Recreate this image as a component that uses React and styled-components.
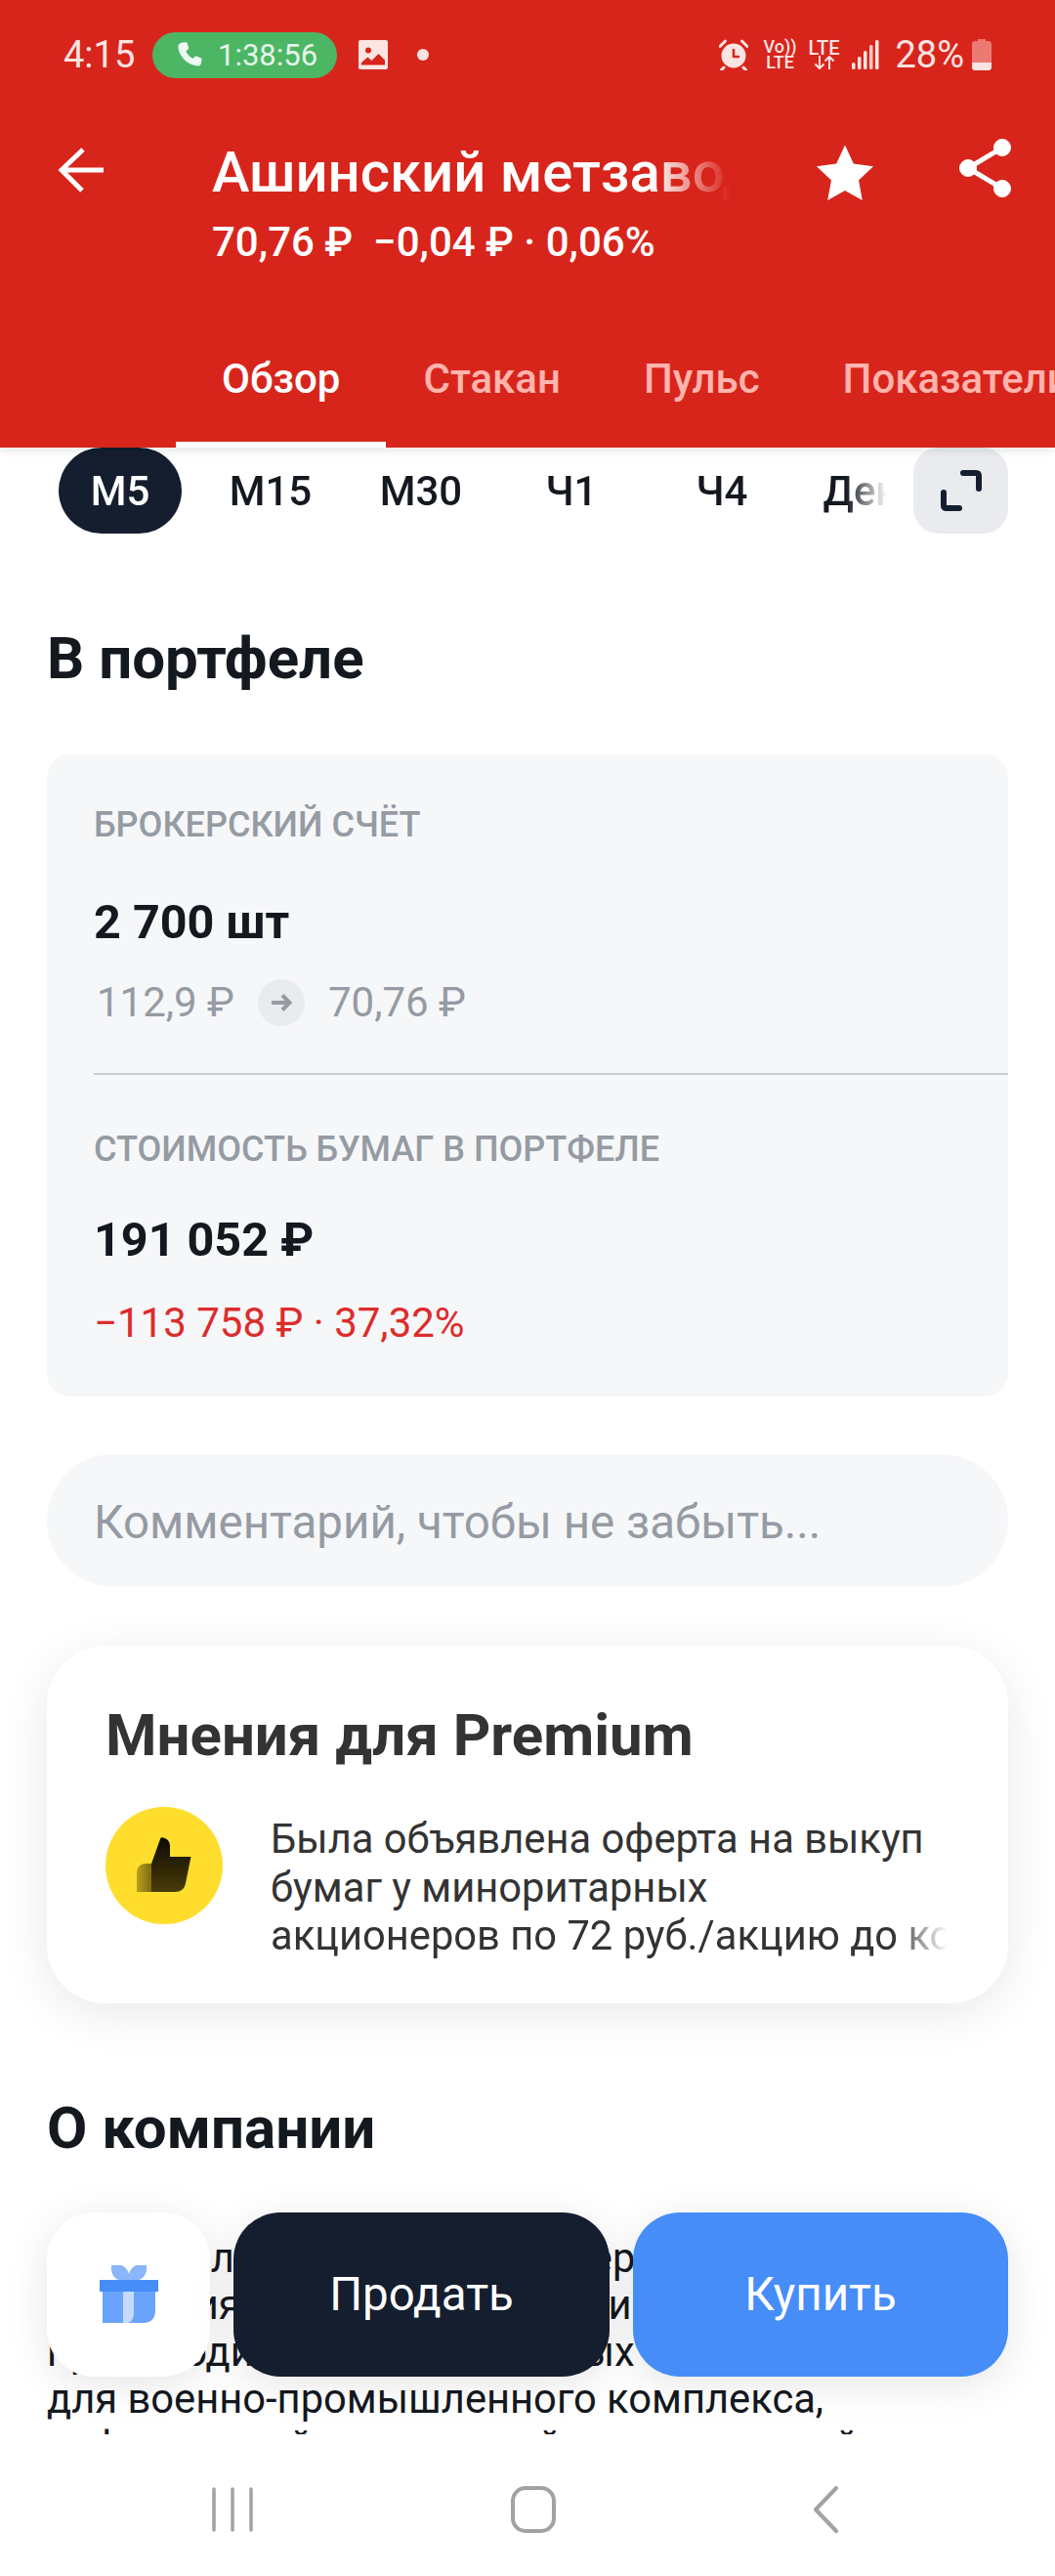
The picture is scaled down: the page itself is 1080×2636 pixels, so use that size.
import React from "react"
import styled, { createGlobalStyle } from "styled-components"

const GlobalStyle = createGlobalStyle`
  html, body {
    margin: 0;
    padding: 0;
    background: #fff;
  }
  * {
    box-sizing: border-box;
  }
`

const Page = styled.div`
  position: relative;
  width: 1080px;
  height: 2636px;
  display: flex;
  flex-direction: column;
  overflow: hidden;
  background: #fff;
  color: #14181f;
  font-family: Roboto, "Noto Sans", sans-serif;
`

const Header = styled.header`
  position: relative;
  z-index: 2;
  height: 458px;
  flex: none;
  background: #d8251c;
  color: #fff;
  box-shadow: 0 2px 10px rgba(0, 0, 0, 0.12);
`

const StatusBar = styled.div`
  height: 112px;
  padding: 0 64px 0 65px;
  display: flex;
  align-items: center;
  color: #fbe4e2;
`

const Time = styled.span`
  font-size: 38px;
  width: 91px;
`

const CallPill = styled.div`
  width: 189px;
  height: 47px;
  border-radius: 24px;
  background: #4cb664;
  display: flex;
  align-items: center;
  padding-left: 24px;
  gap: 15px;
  font-size: 31px;
  color: #e6f6ea;
`

const StatusDot = styled.span`
  width: 12px;
  height: 12px;
  border-radius: 50%;
  background: #fbe4e2;
  margin-left: 29px;
`

const StatusRight = styled.div`
  margin-left: auto;
  display: flex;
  align-items: center;
`

const NetStack = styled.div`
  display: flex;
  flex-direction: column;
  align-items: center;
  font-size: ${(p) => p.$size}px;
  font-weight: 500;
  line-height: 16px;
  margin-left: ${(p) => p.$gap}px;
`

const Percent = styled.span`
  font-size: 38px;
  margin: 0 7px 0 16px;
`

const TitleRow = styled.div`
  height: 214px;
  display: grid;
  grid-template-columns: 217px 530px 1fr;
`

const BackCell = styled.div`
  padding: 37px 0 0 58px;
`

const TitleBlock = styled.div`
  padding-top: 30px;
  min-width: 0;
`

const Title = styled.h1`
  margin: 0;
  font-size: 58px;
  line-height: 68px;
  font-weight: 500;
  white-space: nowrap;
  overflow: hidden;
  -webkit-mask-image: linear-gradient(90deg, #000 85%, transparent 100%);
  mask-image: linear-gradient(90deg, #000 85%, transparent 100%);
`

const Quote = styled.div`
  margin-top: 14px;
  font-size: 42px;
  line-height: 48px;
  font-weight: 500;
  white-space: pre;
`

const HeaderActions = styled.div`
  display: flex;
  align-items: flex-start;
  padding: 32px 0 0 88px;
  gap: 87px;
`

const Tabs = styled.nav`
  height: 132px;
  display: flex;
  padding-left: 180px;
  overflow: hidden;
`

const Tab = styled.div`
  position: relative;
  flex: none;
  padding: 38px 47px 0;
  font-size: 42px;
  line-height: 48px;
  font-weight: 500;
  color: ${(p) => (p.$active ? "#fff" : "#ffb4ad")};
  & + & {
    margin-left: -9px;
  }
  ${(p) =>
    p.$active &&
    `&::after {
      content: "";
      position: absolute;
      left: 0;
      right: 0;
      bottom: 0;
      height: 6px;
      background: #fff;
    }`}
`

const Scroller = styled.main`
  position: relative;
  flex: 1;
  overflow: hidden;
`

const TimeframeRow = styled.div`
  height: 88px;
  padding-left: 60px;
  display: flex;
  align-items: stretch;
`

const Frames = styled.div`
  width: 848px;
  display: flex;
  gap: 28px;
  overflow: hidden;
  -webkit-mask-image: linear-gradient(90deg, #000 95%, transparent 100%);
  mask-image: linear-gradient(90deg, #000 95%, transparent 100%);
`

const Frame = styled.div`
  flex: none;
  width: 126px;
  border-radius: 44px;
  display: flex;
  align-items: center;
  justify-content: center;
  font-size: 42px;
  font-weight: 500;
  background: ${(p) => (p.$active ? "#141e2e" : "transparent")};
  color: ${(p) => (p.$active ? "#fff" : "#14181f")};
`

const ExpandButton = styled.div`
  width: 97px;
  margin-left: 27px;
  border-radius: 26px;
  background: #e9ebee;
  display: flex;
  align-items: center;
  justify-content: center;
`

const Content = styled.div`
  padding: 0 48px;
`

const SectionTitle = styled.h2`
  margin: ${(p) => p.$top}px 0 0;
  font-size: 60px;
  line-height: 66px;
  font-weight: 700;
  color: #14181f;
`

const PortfolioCard = styled.section`
  margin-top: 65px;
  background: #f6f7f9;
  border-radius: 24px;
  padding: 52px 0 51px 48px;
`

const CardLabel = styled.div`
  font-size: 36px;
  line-height: 40px;
  font-weight: 500;
  color: #959ba3;
  margin-top: ${(p) => p.$top || 0}px;
`

const CardValue = styled.div`
  font-size: 48.5px;
  line-height: 56px;
  font-weight: 700;
  margin-top: ${(p) => p.$top}px;
`

const PriceRow = styled.div`
  display: flex;
  align-items: center;
  margin-top: 30px;
  padding-left: 3px;
  font-size: 42px;
  line-height: 48px;
  color: #959ba3;
`

const ArrowBadge = styled.span`
  width: 48px;
  height: 48px;
  margin: 0 24px;
  border-radius: 50%;
  background: #e9ebee;
  display: flex;
  align-items: center;
  justify-content: center;
`

const Divider = styled.hr`
  margin: 48px 0 0;
  border: 0;
  height: 2px;
  background: #c9cdd2;
`

const Loss = styled.div`
  margin-top: 33px;
  font-size: 42px;
  line-height: 48px;
  color: #dd2c2c;
`

const CommentField = styled.div`
  margin-top: 59px;
  height: 136px;
  border-radius: 68px;
  background: #f6f7f9;
  padding: 3px 0 0 48px;
  display: flex;
  align-items: center;
  font-size: 47.5px;
  color: #959ba3;
`

const PremiumCard = styled.section`
  margin-top: 60px;
  height: 366px;
  padding: 58px 0 0 60px;
  border-radius: 60px;
  background: #fff;
  box-shadow: 0 10px 50px rgba(0, 0, 0, 0.09);
`

const PremiumTitle = styled.h3`
  margin: 0;
  font-size: 60px;
  line-height: 68px;
  font-weight: 700;
  color: #333;
`

const Opinion = styled.div`
  margin-top: 39px;
  display: flex;
  gap: 49px;
`

const ThumbCircle = styled.div`
  flex: none;
  width: 120px;
  height: 120px;
  border-radius: 50%;
  background: #ffdd2d;
  display: flex;
  align-items: center;
  justify-content: center;
`

const OpinionText = styled.div`
  width: 693px;
  margin-top: 8px;
  font-size: 41.7px;
  line-height: 49.5px;
  color: #333;
  white-space: nowrap;
`

const OpinionLine = styled.div`
  overflow: hidden;
  ${(p) =>
    p.$fade &&
    `-webkit-mask-image: linear-gradient(90deg, #000 92%, transparent 100%);
    mask-image: linear-gradient(90deg, #000 92%, transparent 100%);`}
`

const About = styled.p`
  margin: 76px 0 0;
  font-size: 41.7px;
  line-height: 48px;
  white-space: nowrap;
  color: #14181f;
`

const ActionBar = styled.div`
  position: absolute;
  z-index: 3;
  left: 48px;
  right: 48px;
  bottom: 204px;
  height: 168px;
  display: grid;
  grid-template-columns: 167px 385px 384px;
  gap: 24px;
`

const ActionButton = styled.button`
  border: 0;
  padding: 0;
  border-radius: 48px;
  background: ${(p) => p.$bg};
  color: #fff;
  font-family: inherit;
  font-size: 47.5px;
  display: flex;
  align-items: center;
  justify-content: center;
  box-shadow: 0 8px 44px rgba(0, 0, 0, 0.1);
`

const BottomNav = styled.div`
  position: relative;
  z-index: 2;
  flex: none;
  height: 145px;
  background: #fff;
  display: flex;
  align-items: center;
  justify-content: space-between;
  padding: 8px 222px 0 216px;
`

const PhoneIcon = () => (
  <svg width="28" height="28" viewBox="0 0 24 24" fill="#eef9f1">
    <path d="M5.6 1.2 8.8 1c.6 0 1 .3 1.200.8l1.200 4c.2.6 0 1.100-.4 1.500L8.900 9c1 2.400 3.300 5 6 6.400l1.900-1.800c.4-.4 1-.5 1.500-.3l3.800 1.600c.5.200.8.700.7 1.300l-.6 3.200c-.2 1.400-1.300 2.600-3 2.500C10.400 21.400 2.700 13.700 2 5c-.1-2 1.500-3.600 3.600-3.800Z" />
  </svg>
)

const PictureIcon = () => (
  <svg width="32" height="32" viewBox="0 0 32 32" style={{ marginLeft: 21 }}>
    <path
      fill="#fbe4e2"
      fillRule="evenodd"
      d="M3 1h26c1.100 0 2 .9 2 2v26c0 1.100-.9 2-2 2H3c-1.100 0-2-.9-2-2V3c0-1.100.9-2 2-2Zm8 7.500a3 3 0 1 0 0 6 3 3 0 0 0 0-6ZM4 26.500h24v-5l-6.500-6.500-7 7-4-3.500-6.500 5.500v2.500Z"
    />
  </svg>
)

const AlarmIcon = () => (
  <svg width="30" height="32" viewBox="0 0 30 32">
    <circle cx="15" cy="17" r="12.500" fill="#fbe4e2" />
    <path d="M15 10v8h6" fill="none" stroke="#d8251c" strokeWidth="2.500" />
    <path d="M1 7.500 6.500 2M29 7.500 23.500 2M5 29l-2.500 2.500M25 29l2.500 2.500" stroke="#fbe4e2" strokeWidth="3" strokeLinecap="round" />
  </svg>
)

const ArrowsIcon = () => (
  <svg width="22" height="14" viewBox="0 0 22 14" fill="none" stroke="#fbe4e2" strokeWidth="2">
    <path d="M6 0v13M1.500 8.500 6 13l4.500-4.500M16 14V1M11.500 5.500 16 1l4.500 4.500" />
  </svg>
)

const SignalIcon = () => (
  <svg width="28" height="30" viewBox="0 0 28 30" style={{ marginLeft: 13 }} fill="#fbe4e2">
    <rect x="0" y="23" width="3.500" height="7" rx="1.500" />
    <rect x="6" y="17" width="3.500" height="13" rx="1.500" />
    <rect x="12" y="11" width="3.500" height="19" rx="1.500" />
    <rect x="18" y="5" width="3.500" height="25" rx="1.500" opacity="0.85" />
    <rect x="24" y="0" width="3.500" height="30" rx="1.500" />
  </svg>
)

const BatteryIcon = () => (
  <svg width="22" height="32" viewBox="0 0 20 32">
    <path d="M6 0h8v2h3c1.700 0 3 1.300 3 3v20H0V5c0-1.700 1.300-3 3-3h3V0Z" fill="#ec7a72" />
    <path d="M0 24h20v5c0 1.700-1.300 3-3 3H3c-1.700 0-3-1.300-3-3v-5Z" fill="#fbe4e2" />
  </svg>
)

const BackIcon = () => (
  <svg width="50" height="50" viewBox="0 0 50 50" fill="none" stroke="#fff" strokeWidth="5">
    <path d="M48 25H6M27 4 5 25l21 21" />
  </svg>
)

const StarIcon = () => (
  <svg width="60" height="60" viewBox="0 0 60 60" fill="#fff" style={{ marginTop: 2 }}>
    <path d="M30 2.500 38.800 21.500 59 24.300 44 38.500 47.800 59 30 49 12.200 59 16 38.500 1 24.300 21.200 21.500Z" />
  </svg>
)

const ShareIcon = () => (
  <svg width="54" height="60" viewBox="0 0 54 60" fill="#fff" stroke="#fff" style={{ marginTop: -2 }}>
    <circle cx="44" cy="9" r="8.500" />
    <circle cx="9" cy="30" r="8.500" />
    <circle cx="44" cy="51" r="8.500" />
    <path d="M44 9 9 30l35 21" fill="none" strokeWidth="5" />
  </svg>
)

const ExpandIcon = () => (
  <svg width="44" height="44" viewBox="0 0 44 44" fill="none" stroke="#141e2e" strokeWidth="6" strokeLinecap="round" strokeLinejoin="round">
    <path d="M24 4h13c2 0 3 1 3 3v13M4 24v13c0 2 1 3 3 3h13" />
  </svg>
)

const SmallArrow = () => (
  <svg width="24" height="24" viewBox="0 0 24 24" fill="none" stroke="#959ba3" strokeWidth="4">
    <path d="M2 12h18M13 4.500l7.500 7.500-7.500 7.500" />
  </svg>
)

const ThumbIcon = () => (
  <svg width="56" height="58" viewBox="0 0 56 58">
    <defs>
      <linearGradient id="thumbFill" x1="0" y1="0" x2="0" y2="1">
        <stop offset="0" stopColor="#0c0a04" />
        <stop offset="1" stopColor="#4a3c08" />
      </linearGradient>
      <linearGradient id="palmFill" x1="0" y1="0" x2="1" y2="0">
        <stop offset="0" stopColor="#b9a01e" />
        <stop offset="1" stopColor="#7e6b10" />
      </linearGradient>
    </defs>
    <path d="M15 27H10C4 27 0 30 0 37v19h15Z" fill="url(#palmFill)" />
    <path d="M15 27 24 2c.4-1.500 1.500-2 3-1.500 4 1 7 3.500 7 8.500v11h21.500L50 47c-1 6-5 9-11 9H15Z" fill="url(#thumbFill)" />
  </svg>
)

const GiftIcon = () => (
  <svg width="60" height="60" viewBox="0 0 60 60">
    <path d="M12 0h10c4 1 7 5 8 9 1-4 4-8 8-9h10c1 8-3 15-9 15H21C15 15 11 8 12 0Z" fill="#8ab6fb" />
    <rect y="15" width="60" height="12" fill="#468df8" />
    <path d="M3 27h54v19c0 8-4 13-12 13H3Z" fill="#6aa3fb" />
    <path d="M24 27h11v22c0 6-3 10-7 10h-4Z" fill="#c5dafc" />
  </svg>
)

const NavRecent = () => (
  <svg width="44" height="46" viewBox="0 0 44 46" stroke="#a2a2a2" strokeWidth="3.500" strokeLinecap="round">
    <path d="M3 2v42M22 2v42M41 2v42" />
  </svg>
)

const NavHome = () => (
  <svg width="46" height="48" viewBox="0 0 46 48" fill="none" stroke="#a2a2a2" strokeWidth="4">
    <rect x="2" y="2" width="42" height="44" rx="13" />
  </svg>
)

const NavBack = () => (
  <svg width="26" height="48" viewBox="0 0 26 48" fill="none" stroke="#a2a2a2" strokeWidth="4" strokeLinecap="round" strokeLinejoin="round">
    <path d="M24 2 3 24l21 22" />
  </svg>
)

const tabs = ["Обзор", "Стакан", "Пульс", "Показатели"]
const frames = ["М5", "М15", "М30", "Ч1", "Ч4", "День"]

export default function App() {
  return (
    <Page>
      <GlobalStyle />
      <Header>
        <StatusBar>
          <Time>4:15</Time>
          <CallPill>
            <PhoneIcon />
            1:38:56
          </CallPill>
          <PictureIcon />
          <StatusDot />
          <StatusRight>
            <AlarmIcon />
            <NetStack $gap={16} $size={18}>
              <span>Vo))</span>
              <span>LTE</span>
            </NetStack>
            <NetStack $gap={12} $size={20}>
              <span>LTE</span>
              <ArrowsIcon />
            </NetStack>
            <SignalIcon />
            <Percent>28%</Percent>
            <BatteryIcon />
          </StatusRight>
        </StatusBar>
        <TitleRow>
          <BackCell>
            <BackIcon />
          </BackCell>
          <TitleBlock>
            <Title>Ашинский метзавод</Title>
            <Quote>70,76 ₽  −0,04 ₽ · 0,06%</Quote>
          </TitleBlock>
          <HeaderActions>
            <StarIcon />
            <ShareIcon />
          </HeaderActions>
        </TitleRow>
        <Tabs>
          {tabs.map((t, i) => (
            <Tab key={t} $active={i === 0}>{t}</Tab>
          ))}
        </Tabs>
      </Header>

      <Scroller>
        <TimeframeRow>
          <Frames>
            {frames.map((f, i) => (
              <Frame key={f} $active={i === 0}>{f}</Frame>
            ))}
          </Frames>
          <ExpandButton>
            <ExpandIcon />
          </ExpandButton>
        </TimeframeRow>

        <Content>
          <SectionTitle $top={95}>В портфеле</SectionTitle>
          <PortfolioCard>
            <CardLabel>БРОКЕРСКИЙ СЧЁТ</CardLabel>
            <CardValue $top={52}>2 700 шт</CardValue>
            <PriceRow>
              <span>112,9 ₽</span>
              <ArrowBadge>
                <SmallArrow />
              </ArrowBadge>
              <span>70,76 ₽</span>
            </PriceRow>
            <Divider />
            <CardLabel $top={56}>СТОИМОСТЬ БУМАГ В ПОРТФЕЛЕ</CardLabel>
            <CardValue $top={45}>191 052 ₽</CardValue>
            <Loss>−113 758 ₽ · 37,32%</Loss>
          </PortfolioCard>

          <CommentField>Комментарий, чтобы не забыть...</CommentField>

          <PremiumCard>
            <PremiumTitle>Мнения для Premium</PremiumTitle>
            <Opinion>
              <ThumbCircle>
                <ThumbIcon />
              </ThumbCircle>
              <OpinionText>
                <OpinionLine>Была объявлена оферта на выкуп</OpinionLine>
                <OpinionLine>бумаг у миноритарных</OpinionLine>
                <OpinionLine $fade>акционеров по 72 руб./акцию до конца</OpinionLine>
              </OpinionText>
            </Opinion>
          </PremiumCard>

          <SectionTitle $top={95}>О компании</SectionTitle>
          <About>
            Один из лидеров в своей сфере<br />
            Компания выпускает прокат и<br />
            производит листы для разных<br />
            для военно-промышленного комплекса,<br />
            нефтегазовой, химической и космической
          </About>
        </Content>
      </Scroller>

      <ActionBar>
        <ActionButton $bg="#fff">
          <GiftIcon />
        </ActionButton>
        <ActionButton $bg="#141e2e">Продать</ActionButton>
        <ActionButton $bg="#468df8">Купить</ActionButton>
      </ActionBar>

      <BottomNav>
        <NavRecent />
        <NavHome />
        <NavBack />
      </BottomNav>
    </Page>
  )
}
